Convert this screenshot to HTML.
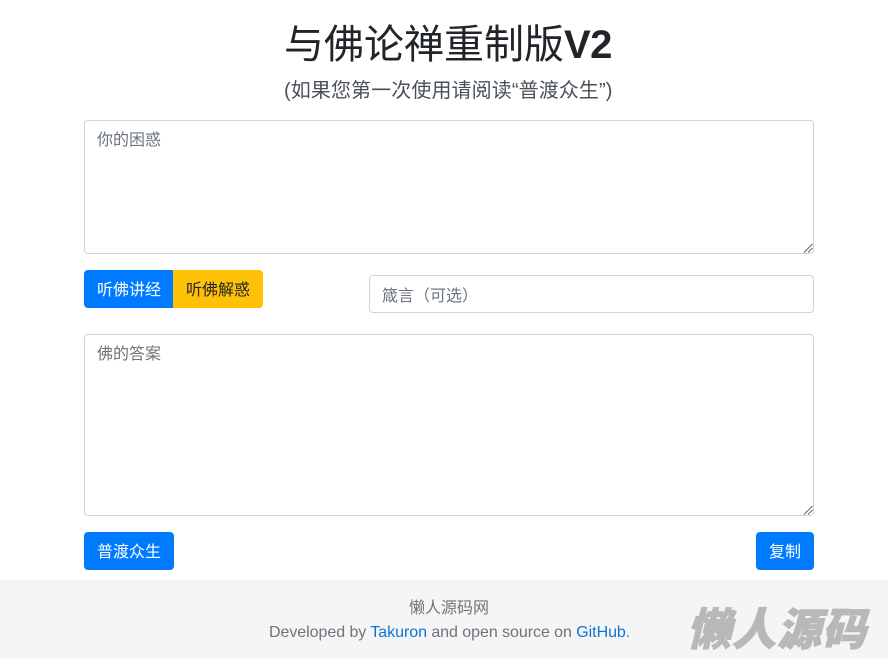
<!DOCTYPE html>
<html lang="zh-CN">
<head>
<meta charset="utf-8">
<title>与佛论禅重制版V2</title>
<style>
html,body{margin:0;padding:0;background:#fff;}
body{position:relative;width:888px;height:661px;overflow:hidden;font-family:"Liberation Sans","Noto Sans CJK SC",sans-serif;color:#212529;}
.a{position:absolute;white-space:nowrap;}
.box{position:absolute;box-sizing:border-box;border:1px solid #ced4da;border-radius:4px;background:#fff;}
.ph{position:absolute;font-size:16px;line-height:24px;color:#6c757d;white-space:nowrap;}
.btn{position:absolute;box-sizing:border-box;height:38px;line-height:38px;font-size:16px;text-align:center;color:#fff;background:#007bff;border-radius:4px;}
.btn span{position:relative;top:2px;}
.grip{position:absolute;width:10px;height:10px;}
a{color:#0c76d5;text-decoration:none;}
</style>
</head>
<body>
<div class="a" style="left:284px;top:15px;font-size:40px;line-height:60px;font-weight:400;color:#212529;">与佛论禅重制版<span style="font-weight:700;letter-spacing:-.6px;">V2</span></div>
<div class="a" style="left:284px;top:76px;font-size:20px;line-height:30px;color:#495057;letter-spacing:.1px;">(如果您第一次使用请阅读“普渡众生”)</div>

<div class="box" style="left:84px;top:120px;width:730px;height:134px;"></div>
<div class="ph" style="left:97px;top:129px;">你的困惑</div>
<svg class="grip" style="left:803px;top:243px;" viewBox="0 0 10 10"><path d="M1 9.5L9.5 1M5 9.5L9.5 5" stroke="#666" stroke-width="1" fill="none"/></svg>

<div class="btn" style="left:84px;top:270px;width:90px;border-radius:4px 0 0 4px;"><span>听佛讲经</span></div>
<div class="btn" style="left:173px;top:270px;width:90px;border-radius:0 4px 4px 0;background:#ffc107;color:#212529;"><span>听佛解惑</span></div>

<div class="box" style="left:369px;top:275px;width:445px;height:38px;"></div>
<div class="ph" style="left:382px;top:285px;">箴言（可选）</div>

<div class="box" style="left:84px;top:334px;width:730px;height:182px;"></div>
<div class="ph" style="left:97px;top:343px;">佛的答案</div>
<svg class="grip" style="left:803px;top:505px;" viewBox="0 0 10 10"><path d="M1 9.5L9.5 1M5 9.5L9.5 5" stroke="#666" stroke-width="1" fill="none"/></svg>

<div class="btn" style="left:84px;top:532px;width:90px;"><span>普渡众生</span></div>
<div class="btn" style="left:756px;top:532px;width:58px;"><span>复制</span></div>

<div class="a" style="left:0;top:580px;width:888px;height:79px;background:#f5f5f5;"></div>
<div class="a" style="left:0;width:898px;top:597px;text-align:center;font-size:16px;line-height:24px;color:#6c757d;">懒人源码网</div>
<div class="a" style="left:269px;top:621px;font-size:16px;line-height:24px;color:#6c757d;letter-spacing:-.05px;">Developed by <a>Takuron</a> and open source on <a>GitHub</a>.</div>
<div class="a" style="left:687px;top:597px;font-size:44px;line-height:58px;font-weight:900;font-style:italic;letter-spacing:1px;color:#b8b8b8;font-family:'Noto Sans CJK SC',sans-serif;-webkit-text-stroke:1px #b8b8b8;">懒人源码</div>
</body>
</html>
